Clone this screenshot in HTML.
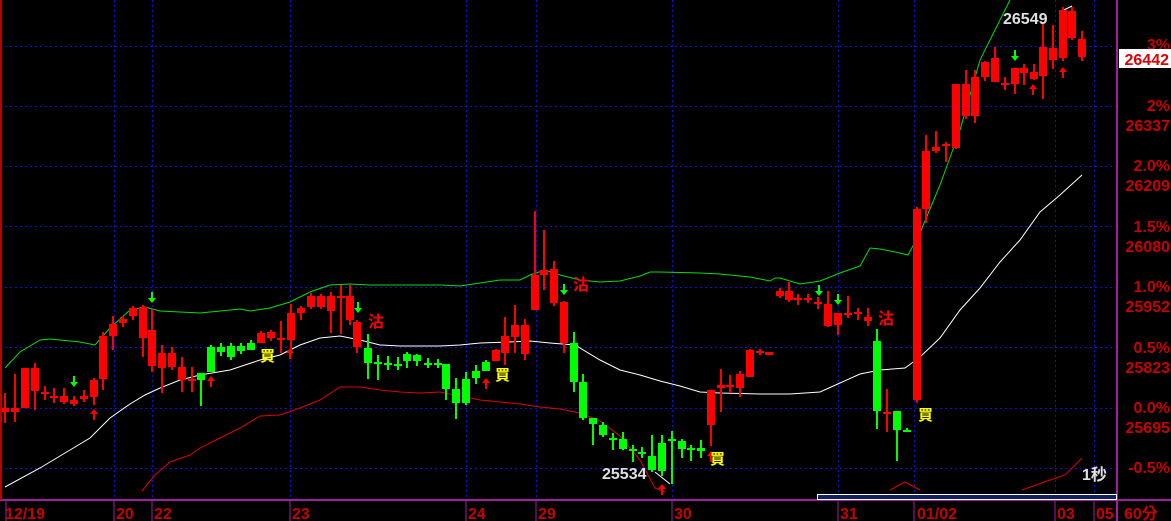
<!DOCTYPE html>
<html><head><meta charset="utf-8"><style>
html,body{margin:0;padding:0;background:#000;width:1171px;height:521px;overflow:hidden}
svg{display:block}
text{font-family:"Liberation Sans","Noto Sans CJK TC",sans-serif;font-weight:bold}
</style></head><body>
<svg id="s" width="1171" height="521" viewBox="0 0 1171 521" xmlns="http://www.w3.org/2000/svg">
<rect width="1171" height="521" fill="#000"/>
<g id="grid" stroke="#1010d8" stroke-width="1" stroke-dasharray="2,3"></g>
<g id="lines" fill="none" stroke-width="1"></g>
<g id="candles"></g>
<g id="marks"></g>
<line x1="1117" y1="0" x2="1117" y2="521" stroke="#a020a0" stroke-width="2"/>
<line x1="0" y1="500" x2="1171" y2="500" stroke="#a020a0" stroke-width="2"/>
<line x1="1" y1="0" x2="1" y2="500" stroke="#c00000" stroke-width="2"/>
<rect x="817.5" y="494.5" width="299" height="5" fill="#102060" stroke="#fff" stroke-width="1"/>
<g fill="#c80000" font-size="16" text-anchor="end" id="axis">
<text x="1170" y="50">3%</text>
<text x="1170" y="111">2%</text><text x="1170" y="131">26337</text>
<text x="1170" y="171">2.0%</text><text x="1170" y="191">26209</text>
<text x="1170" y="232">1.5%</text><text x="1170" y="252">26080</text>
<text x="1170" y="292">1.0%</text><text x="1170" y="312">25952</text>
<text x="1170" y="353">0.5%</text><text x="1170" y="373">25823</text>
<text x="1170" y="413">0.0%</text><text x="1170" y="433">25695</text>
<text x="1170" y="473">-0.5%</text>
</g>
<rect x="1119" y="49" width="52" height="19" fill="#fff"/>
<text x="1169" y="65" font-size="16" fill="#e00000" text-anchor="end">26442</text>
<g fill="#c80000" font-size="16">
<text x="5" y="519">12/19</text><text x="116" y="519">20</text><text x="154" y="519">22</text>
<text x="292" y="519">23</text><text x="468" y="519">24</text><text x="538" y="519">29</text>
<text x="674" y="519">30</text><text x="840" y="519">31</text><text x="917" y="519">01/02</text>
<text x="1057" y="519">03</text><text x="1096" y="519">05</text><text x="1124" y="519">60分</text>
</g>
<g stroke="#a020a0" stroke-width="1">
<line x1="6" y1="500" x2="6" y2="521"/><line x1="114" y1="500" x2="114" y2="521"/><line x1="152" y1="500" x2="152" y2="521"/>
<line x1="290" y1="500" x2="290" y2="521"/><line x1="466" y1="500" x2="466" y2="521"/><line x1="536" y1="500" x2="536" y2="521"/>
<line x1="672" y1="500" x2="672" y2="521"/><line x1="838" y1="500" x2="838" y2="521"/><line x1="914" y1="500" x2="914" y2="521"/>
<line x1="1055" y1="500" x2="1055" y2="521"/><line x1="1094" y1="500" x2="1094" y2="521"/>
</g>
<text x="602" y="479" font-size="16" fill="#e0e0e0">25534</text>
<text x="1003" y="24" font-size="16" fill="#e0e0e0">26549</text>
<text x="1082" y="480" font-size="16" fill="#e0e0e0">1秒</text>
</svg>
<script>
const NS="http://www.w3.org/2000/svg";
function el(p,t,a,txt){const e=document.createElementNS(NS,t);for(const k in a)e.setAttribute(k,a[k]);if(txt)e.textContent=txt;document.getElementById(p).appendChild(e);return e;}
[114,152,290,466,536,672,838,914,1055,1094].forEach(x=>el('grid','line',{x1:x+.5,y1:0,x2:x+.5,y2:500}));
[46,106,166,226,287,347,408,468].forEach(y=>el('grid','line',{x1:0,y1:y+.5,x2:1117,y2:y+.5}));
function pl(pts,c){el('lines','polyline',{points:pts.map(p=>p.join(',')).join(' '),stroke:c});}
pl([[5,368],[20,352],[40,340],[50,339],[60,340],[80,342],[95,345],[110,328],[130,310],[145,307],[160,311],[180,312],[200,313],[220,311],[240,309],[250,311],[270,308],[290,302],[310,292],[330,285],[350,284],[370,285],[400,285],[440,285],[460,286],[480,283],[500,280],[520,280],[530,275],[545,270],[560,275],[580,280],[600,282],[620,281],[640,276],[650,272],[660,272],[700,273],[720,274],[750,277],[770,281],[775,278],[780,278],[800,284],[820,281],[840,273],[860,266],[870,248],[880,249],[900,253],[908,255],[920,233],[940,185],[960,130],[980,60],[1000,20],[1010,0]],'#00e000');
pl([[5,487],[40,468],[70,450],[90,438],[110,418],[130,404],[145,395],[160,388],[180,380],[200,375],[230,370],[260,360],[280,355],[300,345],[320,338],[340,336],[360,340],[380,345],[400,346],[440,346],[460,345],[480,343],[510,342],[530,341],[550,343],[575,345],[600,360],[620,370],[640,375],[660,381],[680,386],[700,392],[720,393],[760,394],[790,394],[820,392],[840,383],[860,374],[880,370],[905,368],[920,357],[940,338],[960,310],[980,288],[1000,262],[1020,240],[1040,212],[1060,195],[1082,175]],'#ffffff');
pl([[142,491],[155,475],[170,462],[190,455],[200,448],[220,438],[240,428],[260,416],[280,415],[300,408],[320,400],[340,387],[360,387],[380,390],[400,392],[420,393],[440,392],[460,396],[480,400],[520,404],[540,407],[560,409],[580,413],[600,421],[620,436],[640,460],[655,488],[665,492]],'#e00000');
pl([[890,490],[905,482],[920,490]],'#e00000');pl([[1022,490],[1050,480],[1065,475],[1082,458]],'#e00000');
pl([[655,472],[670,484]],'#ffffff');pl([[1060,12],[1072,6]],'#ffffff');
const C=[[5,408,412,393,423,'r'],[15,408,412,374,422,'r'],[25,368,408,368,408,'r'],[35,368,391,363,410,'r'],[45,392,394,386,400,'r'],[54,396,398,388,403,'r'],[64,396,402,388,404,'r'],[74,400,404,396,406,'r'],[84,396,399,390,402,'r'],[94,380,397,378,405,'r'],[103,336,379,332,390,'r'],[113,324,336,316,350,'r'],[123,319,323,316,327,'r'],[133,308,316,306,320,'r'],[143,307,338,305,357,'r'],[152,330,366,309,372,'r'],[162,353,368,345,393,'r'],[172,353,367,347,370,'r'],[182,367,380,357,392,'r'],[192,379,381,367,392,'r'],[201,373,380,373,406,'g'],[211,347,372,345,372,'g'],[221,347,352,343,356,'g'],[231,346,357,343,360,'g'],[241,346,351,343,354,'g'],[251,343,350,340,350,'g'],[261,333,343,331,343,'r'],[271,332,338,330,341,'r'],[281,338,340,321,353,'r'],[291,313,340,304,355,'r'],[301,308,313,306,320,'r'],[311,296,307,293,309,'r'],[321,296,307,294,309,'r'],[331,296,311,292,333,'r'],[341,296,298,285,334,'r'],[350,296,320,285,325,'r'],[357,322,347,320,353,'r'],[368,348,363,334,379,'g'],[378,362,364,355,380,'g'],[388,363,365,356,370,'g'],[398,364,365,357,370,'g'],[407,354,361,352,368,'g'],[417,355,361,354,366,'g'],[428,363,365,358,368,'g'],[438,363,365,359,368,'g'],[446,364,389,364,400,'g'],[456,389,403,378,419,'g'],[466,379,403,372,405,'g'],[476,371,378,365,384,'g'],[486,362,371,360,371,'g'],[496,350,361,349,361,'r'],[505,336,353,317,365,'r'],[515,325,337,305,353,'r'],[525,325,354,319,360,'r'],[535,275,310,211,310,'r'],[544,270,275,230,290,'r'],[554,269,303,261,306,'r'],[564,302,343,301,353,'r'],[574,343,382,332,392,'g'],[583,382,418,374,420,'g'],[593,418,424,418,445,'g'],[603,425,435,422,437,'g'],[613,438,440,433,450,'g'],[623,439,449,432,450,'g'],[633,449,451,445,462,'g'],[642,452,454,447,458,'g'],[652,456,470,435,472,'g'],[662,443,471,435,476,'g'],[672,439,441,431,484,'g'],[682,441,449,439,458,'g'],[691,448,450,445,461,'g'],[701,448,451,440,458,'g'],[711,390,425,390,446,'r'],[721,385,388,369,412,'r'],[730,385,387,375,393,'r'],[740,374,388,371,397,'r'],[750,350,377,349,377,'r'],[760,351,353,349,355,'r'],[769,352,355,352,355,'r'],[780,291,296,288,298,'r'],[789,291,300,282,302,'r'],[798,298,300,294,305,'r'],[808,298,300,294,303,'r'],[818,302,304,297,309,'r'],[828,304,326,291,327,'r'],[838,313,325,313,335,'r'],[848,313,315,296,318,'r'],[858,312,314,308,320,'r'],[868,317,321,308,326,'r'],[877,341,411,329,429,'g'],[887,412,413,389,432,'r'],[897,411,430,411,461,'g'],[907,430,431,428,431,'g'],[917,209,400,207,403,'r'],[926,151,209,135,223,'r'],[936,147,151,131,153,'r'],[946,144,146,142,162,'r'],[956,84,148,84,149,'r'],[966,84,116,70,119,'r'],[975,77,116,70,123,'r'],[985,62,77,61,81,'r'],[995,58,82,47,82,'r'],[1005,83,84,77,90,'r'],[1015,68,84,68,94,'r'],[1024,68,73,64,85,'r'],[1034,72,79,64,80,'r'],[1043,47,76,22,99,'r'],[1053,48,60,25,69,'r'],[1063,10,58,7,61,'r'],[1072,11,38,7,40,'r'],[1082,39,57,31,61,'r']];
C.forEach(c=>{const col=c[5]=='r'?'#ff0000':'#00ff00';
el('candles','line',{x1:c[0],y1:c[3],x2:c[0],y2:c[4],stroke:col,'stroke-width':2});
el('candles','rect',{x:c[0]-4,y:c[1],width:8,height:Math.max(2,c[2]-c[1]),fill:col});});
function down(x,y){el('marks','path',{d:`M${x-1},${y-6}h2v6h3l-4,5l-4,-5h3z`,fill:'#00ff00'});}
function up(x,y){el('marks','path',{d:`M${x-1},${y+6}h2v-6h3l-4,-5l-4,5h3z`,fill:'#ff0000'});}
[[152,298],[74,382],[358,308],[564,290],[819,291],[838,300],[1015,56]].forEach(p=>down(...p));
[[94,414],[211,381],[290,353],[486,383],[662,489],[711,456],[1033,89],[1063,72]].forEach(p=>up(...p));
[[376,327],[581,290],[886,324]].forEach(p=>el('marks','text',{x:p[0]-8,y:p[1],'font-size':16,fill:'#ff0000'},'沽'));
[[268,361],[503,380],[718,464],[926,420]].forEach(p=>el('marks','text',{x:p[0]-8,y:p[1],'font-size':15,fill:'#ffff00'},'買'));
</script>
</body></html>
